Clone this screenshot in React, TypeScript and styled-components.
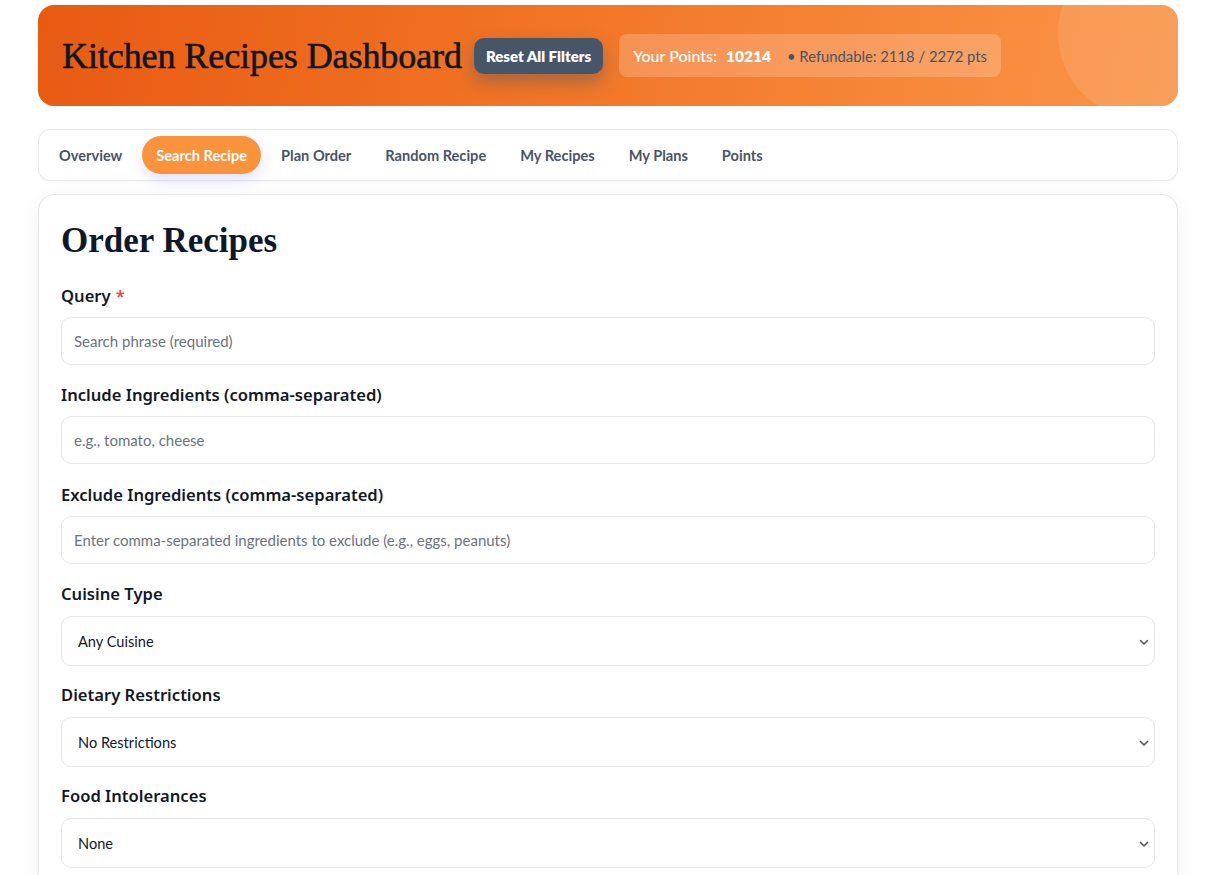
import React, { useState } from "react";
import styled, { createGlobalStyle } from "styled-components";

const GlobalStyle = createGlobalStyle`
  body {
    margin: 0;
    background: #ffffff;
    font-family: "Lato", "Noto Sans", sans-serif;
    color: #111827;
  }
  * { box-sizing: border-box; }
`;

const Page = styled.div`
  max-width: 1140px;
  margin: 0 auto;
  padding-top: 5px;
`;

const Hero = styled.header`
  position: relative;
  overflow: hidden;
  height: 101px;
  padding: 0 24px;
  border-radius: 16px;
  background: linear-gradient(100deg, #e85a12 0%, #f27525 45%, #fa9549 100%);
  display: flex;
  align-items: center;
  gap: 12px;
`;

const Bubble = styled.div`
  position: absolute;
  width: 172px;
  height: 172px;
  top: -58px;
  right: -52px;
  border-radius: 50%;
  background: rgba(255, 255, 255, 0.1);
`;

const Title = styled.h1`
  margin: 0;
  font-family: "Liberation Serif", "DejaVu Serif", serif;
  font-size: 36px;
  font-weight: 400;
  letter-spacing: -0.08px;
  color: #0f172a;
  -webkit-text-stroke: 0.6px #0f172a;
`;

const ResetButton = styled.button`
  height: 36px;
  padding: 0 12px;
  border: none;
  border-radius: 10px;
  background: #475569;
  color: #ffffff;
  font-family: "Lato", sans-serif;
  font-size: 15px;
  font-weight: 800;
  box-shadow: 0 8px 18px rgba(71, 85, 105, 0.45);
  cursor: pointer;
`;

const PointsBox = styled.div`
  margin-left: 4px;
  height: 43px;
  padding: 0 14px;
  border-radius: 8px;
  background: rgba(255, 255, 255, 0.2);
  display: flex;
  align-items: center;
  gap: 9px;
  font-family: "Lato", sans-serif;
`;

const PointsLabel = styled.span<{ $strong?: boolean }>`
  color: #ffffff;
  font-size: ${(p) => (p.$strong ? "15.5px" : "16px")};
  font-weight: ${(p) => (p.$strong ? 800 : 500)};
`;

const Refund = styled.span`
  margin-left: 7px;
  color: #475569;
  font-size: 14.8px;
  font-weight: 400;
`;

const Tabs = styled.nav`
  margin-top: 23px;
  padding: 6px;
  border: 1px solid #e5e7eb;
  border-radius: 12px;
  background: #ffffff;
  display: flex;
  gap: 6px;
  box-shadow: 0 1px 3px rgba(0, 0, 0, 0.04);
`;

const Tab = styled.button<{ $active?: boolean }>`
  height: 38px;
  padding: 0 14px;
  border: none;
  border-radius: 19px;
  background: ${(p) => (p.$active ? "#fb923c" : "transparent")};
  color: ${(p) => (p.$active ? "#ffffff" : "#475569")};
  font-family: "Lato", sans-serif;
  font-size: 14.6px;
  font-weight: 700;
  box-shadow: ${(p) => (p.$active ? "0 6px 14px rgba(129, 120, 255, 0.22)" : "none")};
  cursor: pointer;
`;

const Card = styled.main`
  margin-top: 13px;
  padding: 20px 22px 24px;
  border: 1px solid #e5e7eb;
  border-radius: 16px;
  background: #ffffff;
  box-shadow: 0 4px 20px rgba(0, 0, 0, 0.06);
`;

const Heading = styled.h2`
  margin: 0 0 17px;
  height: 52px;
  line-height: 52px;
  font-family: "Liberation Serif", "DejaVu Serif", serif;
  font-size: 35px;
  font-weight: 700;
  color: #0f172a;
`;

const Field = styled.div<{ $select?: boolean }>`
  margin-bottom: ${(p) => (p.$select ? "17px" : "18.4px")};

  label {
    margin-bottom: ${(p) => (p.$select ? "10px" : "9px")};
  }
`;

const Label = styled.label`
  display: block;
  height: 24px;
  line-height: 24px;
  font-family: "Noto Sans", sans-serif;
  font-size: 16.6px;
  font-weight: 600;
  color: #111827;
`;

const Req = styled.span`
  color: #ef4444;
  margin-left: 5px;
`;

const TextInput = styled.input`
  display: block;
  width: 100%;
  height: 48px;
  padding: 0 12px;
  border: 1px solid #e5e7eb;
  border-radius: 10px;
  font-family: "Lato", sans-serif;
  font-size: 15px;
  color: #111827;
  outline: none;
  &::placeholder {
    color: #6b7280;
  }
`;

const SelectWrap = styled.div`
  position: relative;
`;

const Select = styled.select`
  display: block;
  width: 100%;
  height: 50px;
  padding: 0 28px 0 16px;
  border: 1px solid #e5e7eb;
  border-radius: 10px;
  background: #ffffff;
  appearance: none;
  font-family: "Lato", sans-serif;
  font-size: 14.6px;
  color: #111827;
  outline: none;
`;

const Chevron = styled.svg`
  position: absolute;
  right: 6px;
  top: 50%;
  width: 10px;
  height: 10px;
  margin-top: -4px;
  pointer-events: none;
`;

const tabs = ["Overview", "Search Recipe", "Plan Order", "Random Recipe", "My Recipes", "My Plans", "Points"];

const inputs = [
  { label: "Query", required: true, placeholder: "Search phrase (required)" },
  { label: "Include Ingredients (comma-separated)", placeholder: "e.g., tomato, cheese" },
  {
    label: "Exclude Ingredients (comma-separated)",
    placeholder: "Enter comma-separated ingredients to exclude (e.g., eggs, peanuts)",
  },
];

const selects = [
  { label: "Cuisine Type", options: ["Any Cuisine", "Italian", "Mexican", "Chinese", "Indian"] },
  { label: "Dietary Restrictions", options: ["No Restrictions", "Vegetarian", "Vegan", "Gluten Free"] },
  { label: "Food Intolerances", options: ["None", "Dairy", "Egg", "Peanut", "Seafood"] },
];

const App = (): React.ReactElement => {
  const [active, setActive] = useState("Search Recipe");

  return (
    <Page>
      <GlobalStyle />
      <Hero>
        <Bubble />
        <Title>Kitchen Recipes Dashboard</Title>
        <ResetButton>Reset All Filters</ResetButton>
        <PointsBox>
          <PointsLabel>Your Points:</PointsLabel>
          <PointsLabel $strong>10214</PointsLabel>
          <Refund>• Refundable: 2118 / 2272 pts</Refund>
        </PointsBox>
      </Hero>

      <Tabs>
        {tabs.map((t) => (
          <Tab key={t} $active={t === active} onClick={() => setActive(t)}>
            {t}
          </Tab>
        ))}
      </Tabs>

      <Card>
        <Heading>Order Recipes</Heading>
        {inputs.map((f) => (
          <Field key={f.label}>
            <Label>
              {f.label}
              {f.required && <Req>*</Req>}
            </Label>
            <TextInput placeholder={f.placeholder} />
          </Field>
        ))}
        {selects.map((f) => (
          <Field key={f.label} $select>
            <Label>{f.label}</Label>
            <SelectWrap>
              <Select defaultValue={f.options[0]}>
                {f.options.map((o) => (
                  <option key={o}>{o}</option>
                ))}
              </Select>
              <Chevron viewBox="0 0 10 10">
                <path d="M1.5 3.5 L5 7 L8.5 3.5" fill="none" stroke="#555" strokeWidth="1.6" strokeLinecap="round" strokeLinejoin="round" />
              </Chevron>
            </SelectWrap>
          </Field>
        ))}
      </Card>
    </Page>
  );
};

export default App;
